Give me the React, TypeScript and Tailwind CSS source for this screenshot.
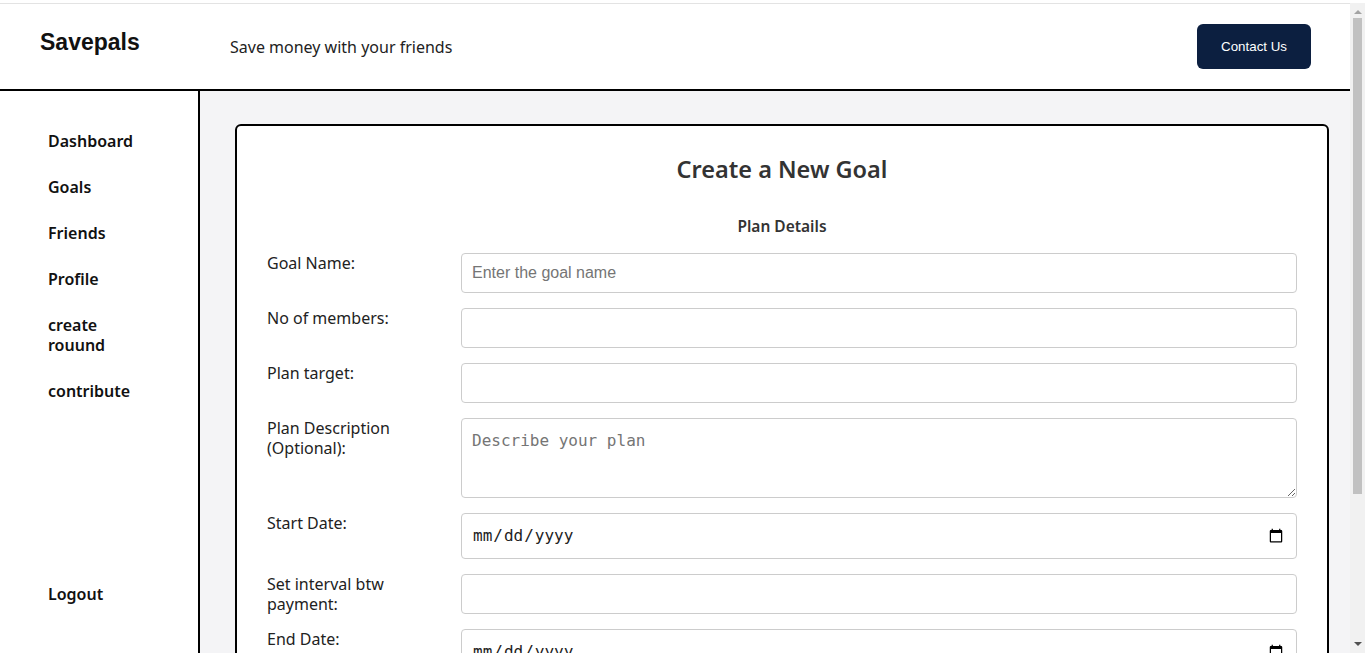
import React from 'react';

const navItems = ['Dashboard', 'Goals', 'Friends', 'Profile', 'create rouund', 'contribute'];

const labelFont = { fontFamily: '"Noto Sans", "Open Sans", sans-serif' };

const inputClass =
  'h-10 w-full rounded-[4px] border border-[#cccccc] bg-white px-[10px] text-[16px] text-[#222] outline-none placeholder:text-[#757575]';

const Row = ({ label, children }: { label: string; children: React.ReactNode }) => (
  <div className="grid grid-cols-[194px_1fr] items-start">
    <label className="w-[150px] text-[16px] leading-5 text-[#222]" style={labelFont}>
      {label}
    </label>
    {children}
  </div>
);

// fake browser scrollbar, as in the screenshot
const Scrollbar = () => (
  <div className="fixed right-0 top-[3px] bottom-0 flex w-[15px] flex-col items-center bg-[#f1f1f1]">
    <div className="mt-[7px] h-0 w-0 border-x-[4px] border-b-[4px] border-x-transparent border-b-[#a3a3a3]" />
    <div className="mt-[4px] h-[476px] w-[9px] bg-[#c1c1c1]" />
    <div className="mb-[7px] mt-auto h-0 w-0 border-x-[4px] border-t-[4px] border-x-transparent border-t-[#505050]" />
  </div>
);

const App = () => {
  return (
    <div className="mr-[15px] min-h-screen bg-white" style={{ fontFamily: '"Liberation Sans", Arial, sans-serif' }}>
      <header className="mt-[3px] flex h-[88px] items-center border-t border-b-2 border-t-[#e3e3e3] border-b-black pl-10 pr-[39px]">
        <div className="mb-2 w-[190px] text-[23px] font-bold text-[#111]">Savepals</div>
        <div className="text-[16px] text-[#222]" style={labelFont}>
          Save money with your friends
        </div>
        <button className="ml-auto h-[45px] rounded-[6px] bg-[#0c1f40] px-6 text-[13.33px] text-white">
          Contact Us
        </button>
      </header>

      <div className="flex">
        <aside className="sticky top-0 flex h-[calc(100vh-91px)] w-[200px] shrink-0 flex-col border-r-2 border-black bg-white pb-[49px] pl-12 pt-10">
          <nav className="flex w-[90px] flex-col gap-[26px]">
            {navItems.map((item) => (
              <a key={item} className="text-[16px] font-semibold leading-5 text-[#111]" style={labelFont}>
                {item}
              </a>
            ))}
          </nav>
          <a className="mt-auto text-[16px] font-semibold leading-5 text-[#111]" style={labelFont}>
            Logout
          </a>
        </aside>

        <main className="flex-1 bg-[#f4f4f6] pb-10 pl-[35px] pr-[21px] pt-[33px]">
          <div className="rounded-[6px] border-2 border-black bg-white px-[30px] pb-10 pt-[27px]">
            <h1 className="text-center text-[23.5px] font-semibold leading-8 text-[#333]" style={labelFont}>
              Create a New Goal
            </h1>
            <h2
              className="mt-[31px] text-center text-[15.5px] font-semibold leading-5 text-[#333]"
              style={labelFont}
            >
              Plan Details
            </h2>

            <form className="mt-[17px] flex flex-col gap-[15px]">
              <Row label="Goal Name:">
                <input className={inputClass} placeholder="Enter the goal name" />
              </Row>
              <Row label="No of members:">
                <input className={inputClass} />
              </Row>
              <Row label="Plan target:">
                <input className={inputClass} />
              </Row>
              <Row label="Plan Description (Optional):">
                <textarea
                  className="h-20 w-full rounded-[4px] border border-[#cccccc] bg-white px-[10px] py-[10px] text-[16px] text-[#222] outline-none placeholder:text-[#757575]"
                  style={{ fontFamily: '"DejaVu Sans Mono", monospace' }}
                  placeholder="Describe your plan"
                />
              </Row>
              <Row label="Start Date:">
                <input
                  type="date"
                  className="h-[46px] w-full rounded-[4px] border border-[#cccccc] bg-white px-[10px] text-[16px] text-[#222] outline-none"
                  style={{ fontFamily: '"DejaVu Sans Mono", monospace' }}
                />
              </Row>
              <Row label="Set interval btw payment:">
                <input className={inputClass} />
              </Row>
              <Row label="End Date:">
                <input
                  type="date"
                  className="h-[46px] w-full rounded-[4px] border border-[#cccccc] bg-white px-[10px] text-[16px] text-[#222] outline-none"
                  style={{ fontFamily: '"DejaVu Sans Mono", monospace' }}
                />
              </Row>
              <Row label="Contribution amount:">
                <input className={inputClass} />
              </Row>
              <div className="mt-4 flex justify-center">
                <button
                  type="button"
                  className="h-[45px] rounded-[6px] bg-[#0c1f40] px-8 text-[15px] text-white"
                  style={labelFont}
                >
                  Create Goal
                </button>
              </div>
            </form>
          </div>
        </main>
      </div>
      <Scrollbar />
    </div>
  );
};

export default App;
